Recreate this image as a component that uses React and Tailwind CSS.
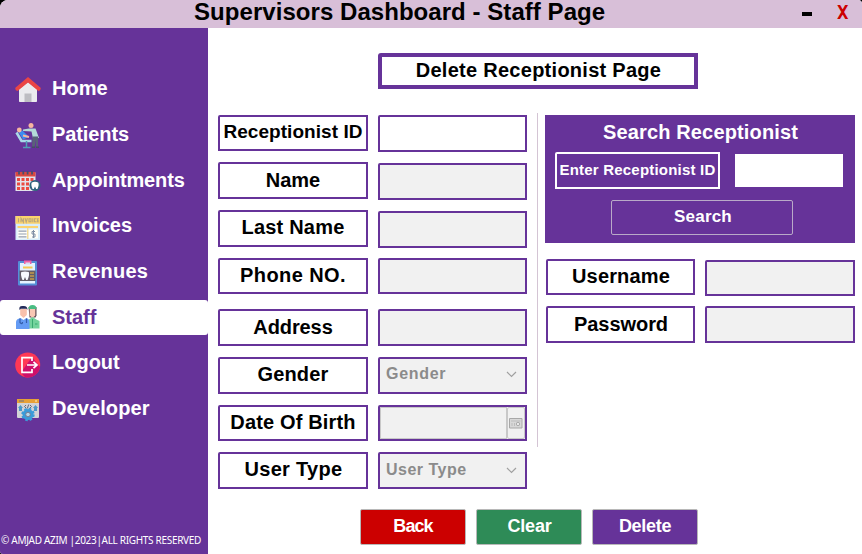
import React from 'react';

const HomeIcon = () => (
  <svg width="26" height="26" viewBox="0 0 26 26">
    <path d="M4 12 13 5l9 7v12.200q0 .8-.8.8H4.800q-.8 0-.8-.8z" fill="#ebebee" />
    <path d="M9.500 16.500h7V25h-7z" fill="#bdbdc2" />
    <path d="M13 0 .4 10.800q-.6 2.600 2.200 3.200L13 5.400 23.400 14q2.800-.6 2.200-3.200z" fill="#ea4545" />
  </svg>
);

const PatientsIcon = () => (
  <svg width="26" height="26" viewBox="0 0 26 26">
    <path d="M1.500 9.500 6.500 18h10" fill="none" stroke="#a9d8e8" strokeWidth="2.600" />
    <path d="M11.500 18v6M8 24.500h7.500" stroke="#4f9fb5" strokeWidth="1.500" />
    <path d="m3.500 9 4-1.500L14 14l-6 2.500z" fill="#3c8df0" />
    <circle cx="4.300" cy="7" r="2.400" fill="#f7b5a0" />
    <path d="m8 12.500 6 1.500" stroke="#f7b5a0" strokeWidth="2" />
    <circle cx="16" cy="2.600" r="2.500" fill="#f7b5a0" />
    <path d="M14 5.500h6.500L24 15l-6 .5-1.500-7-8.500-.5V6.500z" fill="#b3dad8" />
    <path d="M17.500 13.500H23v11h-2v-8l-1.500 8H17z" fill="#59617a" />
    <path d="M17 24.300h3M21 24.300h3" stroke="#454d66" strokeWidth="1.400" />
  </svg>
);

const AppointmentsIcon = () => (
  <svg width="26" height="26" viewBox="0 0 26 26">
    <path d="M.5 3.500h20V22H.5z" fill="#e3e2ea" />
    <path d="M.5 3h20v4.500H.5z" fill="#d94840" />
    <path d="M4 2v3.500M8.300 2v3.500M12.600 2v3.500M17 2v3.500" stroke="#464f6e" strokeWidth="1.800" />
    <path d="M2 9h3v3H2zM6.500 9h3v3h-3zM11 9h3v3h-3zM15.500 9h3v3h-3zM2 13.500h3v3H2zM6.500 13.500h3v3h-3zM11 13.500h3v3h-3zM2 18h3v3H2zM6.500 18h3v3h-3zM11 18h3v3h-3z" fill="#eb4940" />
    <circle cx="20" cy="16.500" r="5.500" fill="#31647e" />
    <path d="M16.800 13.500q3.200-1.400 6.400 0 1.200 2-.8 6.500h-1.200L20 17.500 18.800 20h-1.200q-2-4.500-.8-6.500" fill="#fff" />
  </svg>
);

const InvoicesIcon = () => (
  <svg width="26" height="26" viewBox="0 0 26 26">
    <path d="M.5 1h24.500v24H.5z" fill="#d7ecfb" />
    <path d="M.5 1h24.500v7.800H.5z" fill="#fbd36d" />
    <path d="M3.500 3.200v4M6 7.200v-4l2.400 4v-4M10 3.200l1.200 4 1.200-4M14 3.700h2v3h-2zM17.800 3.200v4M21.500 3.700h-2v3h2M23.800 3.700H22.500v3h1.300M22.500 5.200h1.300" fill="none" stroke="#b8a67d" strokeWidth="1.100" />
    <path d="M2.500 11h20.500v2H2.500z" fill="#fbd36d" />
    <path d="M2.500 14.500h9.800v9H2.500zM13.500 14.500H23v9h-9.500z" fill="#fffef8" />
    <path d="M3.500 16.200h8M3.500 19h8M3.500 21.800h8" stroke="#929db0" strokeWidth="1.200" />
    <path d="M12.800 13v11" stroke="#fbd36d" />
    <path d="M20 16.500h-3v2.500h3v3h-3M18.500 15v8" fill="none" stroke="#8190a6" />
  </svg>
);

const RevenuesIcon = () => (
  <svg width="26" height="26" viewBox="0 0 26 26">
    <rect x="3" y="1" width="19" height="24.500" rx="1" fill="#548fd7" />
    <path d="M5 3h15v20.500H5z" fill="#e5f3ff" />
    <path d="M9 .5h7.500v3.500H9z" fill="#ef62a5" />
    <path d="M10.500 2.500h4.500v2h-4.500z" fill="#d8dff3" />
    <path d="M8 6.500h9.500v2H8z" fill="#f7c653" />
    <path d="M4.500 10.500h16v10.500h-16z" fill="#625d68" />
    <path d="M6.300 12q3.700-1 7.500 0 1 3-1.300 8h-1.300L10 17l-1.200 3H7.500q-2.200-5-1.200-8" fill="#f8fbff" />
    <path d="M15 13h4M15 16h4M15 19h4" stroke="#c59b4b" strokeWidth="1.500" />
  </svg>
);

const StaffIcon = () => (
  <svg width="26" height="26" viewBox="0 0 26 26">
    <path d="M13.500 2h8v8.500l-1 2h-6z" fill="#5f4a55" />
    <path d="M14.700 4h5.600v6.500L17.500 13l-2.800-2.500z" fill="#f9c7b5" />
    <path d="M13.500 4q0-4 4-4t4 4z" fill="#49bd83" />
    <path d="M14 14.500 17.500 12l3.800 2.500 3.200 1.500v7.500H14z" fill="#73d39c" />
    <path d="M17.500 14v9M20 19h2.500" stroke="#39aa71" />
    <path d="M5.200 4h6.600v6L8.500 13 5.200 10z" fill="#f8c1ac" />
    <path d="M4.500 5Q3.500.5 8 1q4.500-.5 4.500 4l-1-1.300H5.800z" fill="#252c5b" />
    <path d="M1 24v-7q0-3 4.500-4l3 2 3-2q3 1 3 4v7z" fill="#649bf4" />
    <path d="M5 13.500v4q2.500 2.500 2.500-.5M11.500 13.500V18" fill="none" stroke="#345da9" strokeWidth="1.200" />
  </svg>
);

const LogoutIcon = () => (
  <svg width="26" height="26" viewBox="0 0 26 26">
    <circle cx="12.700" cy="13" r="12.500" fill="#ff3855" />
    <path d="M6 20.500 17 5l8 10A12.500 12.500 0 0 1 10 25.200z" fill="#cf106a" />
    <path d="M17 9V5.700H7v14.600h10V17" fill="none" stroke="#fff" strokeWidth="1.700" />
    <path d="M12 13h9M18.500 9.800l3.500 3.200-3.500 3.200" fill="none" stroke="#fff" strokeWidth="1.700" />
  </svg>
);

const DeveloperIcon = () => (
  <svg width="26" height="26" viewBox="0 0 26 26">
    <rect x="2" y="2" width="22" height="19" rx="1" fill="#d3d3d6" />
    <path d="M2 2h22v4H2z" fill="#e7a137" />
    <path d="M4 4h5" stroke="#6d7186" />
    <path d="M20 4h2" stroke="#fff2c5" />
    <path d="m5.500 8 2.500 3H7v3H4v-3H3zM20.500 8l2.500 3h-1v3h-3v-3h-1z" fill="#4c98c7" />
    <path d="m11 8-1.500 1.500L11 11M15 8l1.500 1.500L15 11M13.700 7.500l-1.400 4" fill="none" stroke="#646879" />
    <circle cx="13" cy="17.500" r="5.500" fill="#3b9bd8" />
    <circle cx="13" cy="17.500" r="5.700" fill="none" stroke="#3b9bd8" strokeWidth="2" strokeDasharray="2.500 1.980" />
    <circle cx="13" cy="17.500" r="2.300" fill="#b9d8e8" stroke="#777c91" />
  </svg>
);

const NAV = [
  { label: 'Home', Icon: HomeIcon, box: 'h-[46px]' },
  { label: 'Patients', Icon: PatientsIcon, box: 'h-[46px] tracking-[-0.1px]' },
  { label: 'Appointments', Icon: AppointmentsIcon, box: 'h-[46px] tracking-[-0.15px]' },
  { label: 'Invoices', Icon: InvoicesIcon, box: 'h-[45px]' },
  { label: 'Revenues', Icon: RevenuesIcon, box: 'h-[46px] tracking-[0.2px]' },
  { label: 'Staff', Icon: StaffIcon, box: 'mt-[5px] mb-[6px] h-[35px] rounded-[3px] bg-white text-[#663399]', active: true },
  { label: 'Logout', Icon: LogoutIcon, box: 'h-[45px]' },
  { label: 'Developer', Icon: DeveloperIcon, box: 'h-[46px] tracking-[0.1px]' },
];

const LABELS = [
  { text: 'Receptionist ID', box: 'mt-0 h-[36px] text-[19px] pb-[3px] tracking-[0.05px]' },
  { text: 'Name', box: 'mt-[11px] h-[37px] pb-[2px]' },
  { text: 'Last Name', box: 'mt-[11px] h-[37px] pb-[3px] tracking-[0.2px]' },
  { text: 'Phone NO.', box: 'mt-[11px] h-[36px] pb-[3px] tracking-[0.4px]' },
  { text: 'Address', box: 'mt-[15px] h-[37px] pb-[1px] tracking-[-0.1px]' },
  { text: 'Gender', box: 'mt-[11px] h-[37px] pb-[3px] tracking-[0.2px]' },
  { text: 'Date Of Birth', box: 'mt-[11px] h-[36px] pb-[3px] tracking-[0.15px]' },
  { text: 'User Type', box: 'mt-[11px] h-[37px] pb-[3px] pl-px tracking-[0.3px]' },
];

const Label = ({ className, children }) => (
  <div className={`flex items-center justify-center whitespace-nowrap rounded-tl-[2px] border-2 border-[#663399] bg-white text-black ${className}`}>
    {children}
  </div>
);

const Field = ({ className = '', children }) => (
  <div className={`flex rounded-tl-[2px] border-2 border-[#663399] ${className}`}>{children}</div>
);

const SelectField = ({ className, children }) => (
  <Field className={`items-center justify-between bg-[#f1f1f1] pl-[6px] pr-[8px] text-[16px] text-[#8b8b8b] ${className}`}>
    <span className="leading-none">{children}</span>
    <svg width="11" height="7" viewBox="0 0 11 7" className="mt-[1px]">
      <path d="m1 1 4.500 4.500L10 1" fill="none" stroke="#a0a0a0" strokeWidth="1.200" />
    </svg>
  </Field>
);

const ActionButton = ({ className, children }) => (
  <button className={`flex h-9 w-[106px] items-center justify-center rounded-[2px] border border-[#b8b8b8] pb-[3px] text-[18px] leading-none font-bold text-white ${className}`}>
    {children}
  </button>
);

export default function App() {
  return (
    <div className="h-[554px] w-[862px] overflow-hidden bg-black font-['Liberation_Sans',Arial,sans-serif] text-[20px] leading-none font-bold">
      <div className="flex h-full flex-col overflow-hidden rounded-tl-[8px] rounded-tr-[4px] rounded-bl-[3px] bg-white">
        <header className="flex h-7 shrink-0 items-start bg-[#d8bfd8] text-black">
          <h1 className="ml-[194px] w-[608px] whitespace-nowrap text-[24px] leading-[24px] tracking-[0.05px]">Supervisors Dashboard - Staff Page</h1>
          <button className="mt-[12px] h-[4px] w-[10px] bg-black" aria-label="Minimize" />
          <button className="mt-[3px] ml-[25px] font-['DejaVu_Sans_Mono',monospace] text-[19px] leading-[18px] text-[#cc0000]">X</button>
        </header>

        <div className="flex min-h-0 flex-1">
          <aside className="flex w-[208px] shrink-0 flex-col bg-[#663399] pt-[38px] text-white">
            {NAV.map(({ label, Icon, box, active }) => (
              <div key={label} className={`flex shrink-0 items-center pl-[15px] ${box}`}>
                <div className={active ? '' : 'pt-[2px]'}>
                  <Icon />
                </div>
                <span className={`ml-[11px] ${active ? 'pb-[1px]' : 'pb-[3px]'}`}>{label}</span>
              </div>
            ))}
            <div className="mt-auto mb-[7px] pl-px font-['Noto_Sans',sans-serif] text-[10px] leading-[13px] font-normal tracking-[-0.31px] whitespace-nowrap">
              © AMJAD AZIM |2023|ALL RIGHTS RESERVED
            </div>
          </aside>

          <main className="flex flex-1 flex-col pl-[10px]">
            <h2 className="mt-[25px] ml-[160px] flex h-9 w-[320px] items-center justify-center rounded-tl-[3px] border-4 border-[#663399] pb-[2px] pl-px tracking-[0.27px] text-black">
              Delete Receptionist Page
            </h2>

            <div className="mt-[24px] flex h-[376px]">
              <div className="mt-[2px] flex w-[150px] flex-col">
                {LABELS.map(({ text, box }) => (
                  <Label key={text} className={box}>{text}</Label>
                ))}
              </div>

              <div className="mt-[2px] ml-[10px] flex w-[149px] flex-col">
                <Field className="h-[37px] bg-white" />
                <Field className="mt-[11px] h-[37px] bg-[#f1f1f1]" />
                <Field className="mt-[11px] h-[37px] bg-[#f1f1f1]" />
                <Field className="mt-[10px] h-[36px] bg-[#f1f1f1]" />
                <Field className="mt-[15px] h-[37px] bg-[#f1f1f1]" />
                <SelectField className="mt-[11px] h-[37px] pb-[3px] tracking-[0.7px]">Gender</SelectField>
                <Field className="mt-[11px] h-[36px] bg-[#f1f1f1]">
                  <div className="flex-1 border border-[#c8c8c8]" />
                  <div className="flex w-[18px] items-center justify-center rounded-[2px] border border-[#c8c8c8]">
                    <svg width="14" height="11" viewBox="0 0 14 11">
                      <path d="M.5.5h12.500v9.500H.5z" fill="#d8d8d8" stroke="#a8a8a8" />
                      <path d="M2 3h9.500M3 5v3M5.500 5v3" stroke="#bcbcbc" />
                      <circle cx="9" cy="6" r="1.700" fill="#e8e8e8" stroke="#acacac" />
                    </svg>
                  </div>
                </Field>
                <SelectField className="mt-[11px] h-[37px] pb-[1px] tracking-[0.5px]">User Type</SelectField>
              </div>

              <div className="ml-[10px] h-[334px] w-px bg-[#d4c4d4]" />

              <div className="mt-[2px] ml-[7px] flex w-[310px] flex-col">
                <section className="flex h-[128px] flex-col items-center bg-[#663399] text-white">
                  <h3 className="mt-[7px] h-[30px] pl-px leading-[20px] tracking-[0.15px]">Search Receptionist</h3>
                  <div className="flex w-full pl-[10px]">
                    <div className="flex h-[37px] w-[165px] items-center justify-center rounded-tl-[2px] border-2 border-white pb-[3px] text-[15px] tracking-[0.2px] whitespace-nowrap">
                      Enter Receptionist ID
                    </div>
                    <div className="mt-[2px] ml-[15px] h-[33px] w-[108px] bg-white" />
                  </div>
                  <button className="mt-[11px] ml-[4px] flex h-[35px] w-[182px] items-center justify-center rounded-[2px] border border-[#b9aac8] pb-[3px] pl-[2px] text-[17px] leading-none tracking-[0.2px]">
                    Search
                  </button>
                </section>

                <div className="mt-[16px] flex pl-px">
                  <Label className="h-[36px] w-[149px] pb-[3px] pl-px tracking-[0.15px]">Username</Label>
                  <Field className="mt-px ml-[10px] h-[36px] w-[150px] bg-[#f1f1f1]" />
                </div>
                <div className="mt-[10px] flex pl-px">
                  <Label className="h-[37px] w-[149px] pb-[2px] pl-px tracking-[-0.05px]">Password</Label>
                  <Field className="ml-[10px] h-[37px] w-[150px] bg-[#f1f1f1]" />
                </div>
              </div>
            </div>

            <div className="mt-[20px] ml-[142px] flex gap-[10px]">
              <ActionButton className="bg-[#cc0000] tracking-[-0.9px]">Back</ActionButton>
              <ActionButton className="bg-[#2e8b57] pl-px tracking-[-0.2px]">Clear</ActionButton>
              <ActionButton className="bg-[#663399] tracking-[-0.3px]">Delete</ActionButton>
            </div>
          </main>
        </div>
      </div>
    </div>
  );
}
